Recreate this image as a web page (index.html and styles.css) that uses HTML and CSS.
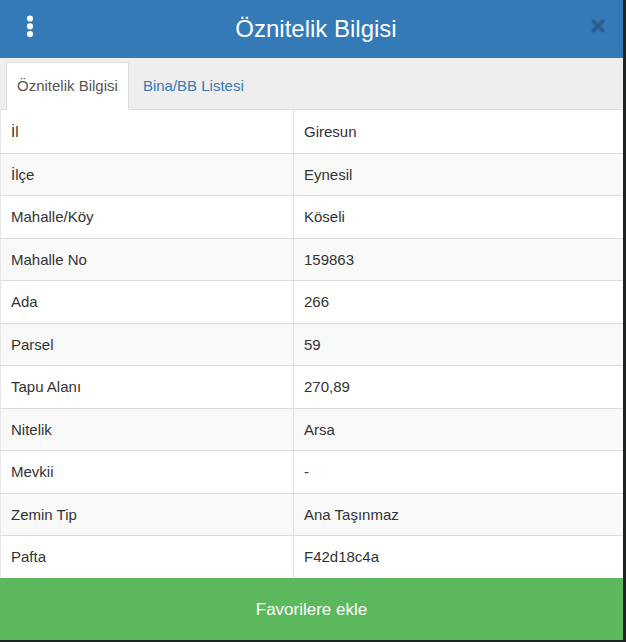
FILE: index.html
```html
<!DOCTYPE html>
<html lang="tr">
<head>
<meta charset="utf-8">
<title>Öznitelik Bilgisi</title>
<link rel="stylesheet" href="styles.css">
</head>
<body>
<div class="panel">
  <header class="panel-header">
    <button class="menu-btn" aria-label="Menü">
      <svg width="8" height="23" viewBox="0 0 8 23"><circle cx="4" cy="3.5" r="3.1" fill="#fff"/><circle cx="4" cy="11.3" r="3.1" fill="#fff"/><circle cx="4" cy="19.1" r="3.1" fill="#fff"/></svg>
    </button>
    <h1 class="panel-title">Öznitelik Bilgisi</h1>
    <button class="close-btn" aria-label="Kapat">
      <svg width="14" height="14" viewBox="0 0 14 14"><g opacity="0.2" stroke="#000" stroke-width="4" stroke-linecap="round"><path d="M2.5 2.5 L11.5 11.5 M11.5 2.5 L2.5 11.5"/></g></svg>
    </button>
  </header>
  <ul class="tabs">
    <li class="tab active">Öznitelik Bilgisi</li>
    <li class="tab">Bina/BB Listesi</li>
  </ul>
  <table class="attr-table">
    <colgroup><col class="key-col"><col></colgroup>
    <tbody>
      <tr><td>İl</td><td>Giresun</td></tr>
      <tr><td>İlçe</td><td>Eynesil</td></tr>
      <tr><td>Mahalle/Köy</td><td>Köseli</td></tr>
      <tr><td>Mahalle No</td><td>159863</td></tr>
      <tr><td>Ada</td><td>266</td></tr>
      <tr><td>Parsel</td><td>59</td></tr>
      <tr><td>Tapu Alanı</td><td>270,89</td></tr>
      <tr><td>Nitelik</td><td>Arsa</td></tr>
      <tr><td>Mevkii</td><td>-</td></tr>
      <tr><td>Zemin Tip</td><td>Ana Taşınmaz</td></tr>
      <tr><td>Pafta</td><td>F42d18c4a</td></tr>
    </tbody>
  </table>
  <button class="fav-btn">Favorilere ekle</button>
</div>
</body>
</html>
```
FILE: styles.css
```css
* { box-sizing: border-box; }
html, body { margin: 0; padding: 0; }
body {
  background: #1f2521;
  font-family: "Liberation Sans", Arial, sans-serif;
  color: #333;
  width: 626px;
  height: 642px;
  overflow: hidden;
}
.panel {
  width: 623px;
  height: 639.5px;
  background: #fff;
  display: flex;
  flex-direction: column;
}
.panel-header {
  height: 58px;
  flex: none;
  background: #337ab7;
  display: grid;
  grid-template-columns: 1fr auto 1fr;
  align-items: start;
}
.menu-btn, .close-btn {
  background: none;
  border: 0;
  padding: 0;
  display: block;
  line-height: 0;
}
.menu-btn { justify-self: start; margin: 15px 0 0 26px; }
.close-btn { justify-self: end; margin: 19px 18px 0 0; }
.panel-title {
  margin: 0;
  padding-left: 9px;
  font-weight: normal;
  font-size: 24px;
  line-height: 57px;
  color: #fff;
}
.tabs {
  list-style: none;
  margin: 0;
  padding: 4px 6px 0;
  height: 52px;
  flex: none;
  background: #eee;
  border-bottom: 1px solid #ddd;
  display: flex;
  align-items: stretch;
}
.tab {
  font-size: 15px;
  line-height: 20px;
  padding: 13px 10px 14px;
  border: 1px solid transparent;
  margin-right: 3px;
  color: #337ab7;
  border-radius: 2px 2px 0 0;
}
.tab.active {
  background: #fff;
  color: #555;
  border-color: #ddd;
  border-bottom-color: #fff;
  margin-bottom: -1px;
}
.attr-table {
  width: 623px;
  border-collapse: separate;
  border-spacing: 0;
  table-layout: fixed;
  flex: none;
}
.key-col { width: 294px; }
.attr-table td {
  font-size: 15px;
  line-height: 21.5px;
  padding: 10px 10px;
  border-top: 1px solid #ddd;
  white-space: nowrap;
}
.attr-table tr:first-child td { border-top: 0; padding-top: 11px; }
.attr-table td:first-child {
  border-left: 1px solid #e6e6e6;
  border-right: 1px solid #ddd;
}
.attr-table tr:nth-child(even) td { background: #f9f9f9; }
.fav-btn {
  flex: 1;
  width: 100%;
  border: 0;
  margin: 0;
  background: #5cb85c;
  color: #fff;
  font-family: "Liberation Sans", Arial, sans-serif;
  font-size: 17px;
  padding: 3px 0 0;
}
```
